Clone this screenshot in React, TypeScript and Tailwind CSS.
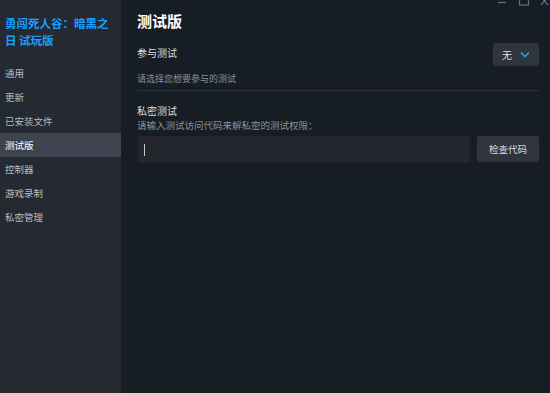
import React, { useState } from 'react';

const NAV_ITEMS = ['通用', '更新', '已安装文件', '测试版', '控制器', '游戏录制', '私密管理'];

const WindowControls: React.FC = () => (
    <div className="absolute top-0 right-0 flex items-start h-[8px] overflow-hidden text-[#67707b]">
        <svg width="12" height="8" viewBox="0 0 12 8" className="mr-[10px]">
            <line x1="2" y1="2.5" x2="10" y2="2.5" stroke="currentColor" strokeWidth="1.2" />
        </svg>
        <svg width="12" height="8" viewBox="0 0 12 8" className="mr-[10px]">
            <rect x="1.5" y="-4" width="9" height="9" fill="none" stroke="currentColor" strokeWidth="1.2" />
        </svg>
        <svg width="10" height="8" viewBox="0 0 10 8">
            <path d="M1 -3 L8 5 M8 -3 L1 5" stroke="currentColor" strokeWidth="1.2" />
        </svg>
    </div>
);

export default function App() {
    const [active, setActive] = useState('测试版');
    const [code, setCode] = useState('');

    return (
        <div
            className="relative flex w-[550px] h-[393px] overflow-hidden bg-[#171d25]"
            style={{ fontFamily: '"Noto Sans CJK SC", "Noto Sans", sans-serif' }}
        >
            <aside className="w-[121px] shrink-0 bg-[#252931] pt-[15px]">
                <h2 className="pl-[5px] pr-[8px] text-[11.5px] font-bold leading-[17px] text-[#1a9fff]">
                    勇闯死人谷：暗黑之日 试玩版
                </h2>
                <nav className="mt-[12px] flex flex-col">
                    {NAV_ITEMS.map(item => (
                        <button
                            key={item}
                            onClick={() => setActive(item)}
                            className={`h-[24px] px-[5px] text-left text-[9.5px] ${
                                active === item ? 'bg-[#3d4450] text-white' : 'text-[#b8bcbf]'
                            }`}
                        >
                            {item}
                        </button>
                    ))}
                </nav>
            </aside>

            <main className="flex-1 pl-[16px] pr-[11px] pt-[9px]">
                <h1 className="text-[15px] font-bold leading-[24px] text-white">测试版</h1>

                <div className="mt-[10px] flex items-start justify-between">
                    <div>
                        <div className="text-[10px] leading-[14px] text-[#dcdedf] mt-[3px]">参与测试</div>
                        <div className="mt-[12px] text-[9px] leading-[14px] text-[#8b929a]">请选择您想要参与的测试</div>
                    </div>
                    <button className="flex items-center gap-[8px] h-[23px] w-[46px] justify-center rounded-[2px] bg-[#30343c] text-[10px] text-[#dcdedf]">
                        无
                        <svg width="10" height="7" viewBox="0 0 10 7">
                            <path d="M1 1.5 L5 5.5 L9 1.5" fill="none" stroke="#1a9fff" strokeWidth="1.6" />
                        </svg>
                    </button>
                </div>

                <div className="mt-[4px] h-px bg-[#2e333b]" />

                <div className="mt-[13px] text-[10px] leading-[14px] text-[#dcdedf]">私密测试</div>
                <div className="text-[9.5px] leading-[14px] text-[#8b929a]">请输入测试访问代码来解私密的测试权限：</div>

                <div className="mt-[4px] flex gap-[7px]">
                    <div className="flex-1 h-[27px] ml-px flex items-center bg-[#23262c] rounded-[2px] px-[6px]">
                        <span className="w-px h-[12px] bg-[#c7c9cc]" />
                        <input
                            value={code}
                            onChange={e => setCode(e.target.value)}
                            className="flex-1 bg-transparent outline-none text-[10px] text-white"
                        />
                    </div>
                    <button className="w-[62px] h-[26px] rounded-[2px] bg-[#30343c] text-[9.5px] text-[#dcdedf]">
                        检查代码
                    </button>
                </div>
            </main>

            <WindowControls />
        </div>
    );
}
